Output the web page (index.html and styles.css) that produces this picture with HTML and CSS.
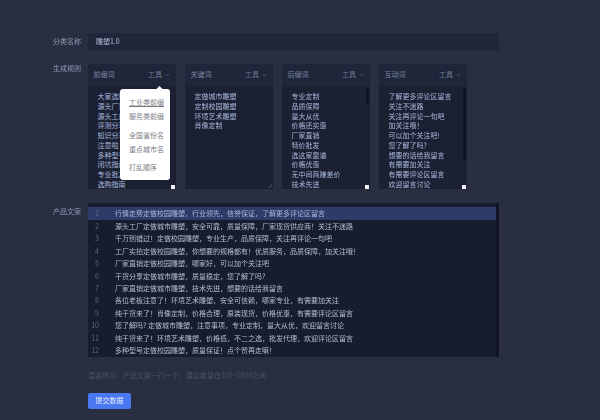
FILE: index.html
```html
<!DOCTYPE html>
<html lang="zh">
<head>
<meta charset="utf-8">
<title>分类</title>
<link rel="stylesheet" href="styles.css">
</head>
<body>
<main class="form">
  <div class="row">
    <label class="label label-input">分类名称</label>
    <div class="input">雕塑1.0</div>
  </div>
  <div class="row">
    <label class="label label-rules">生成规则</label>
    <div class="cards">
      <section class="card">
        <header class="card-head"><span>前缀词</span><span class="tool">工具<svg class="chev" viewBox="0 0 6 4"><path d="M1 1l2 2 2-2"/></svg></span></header>
        <div class="words">
          <p>大家选购</p><p>源头厂家</p><p>源头工厂</p><p>评测分享</p><p>知识分享</p><p>注意啦</p><p>多种型号</p><p>闭坑指南</p><p>专业批发</p><p>选购指南</p>
          <i class="corner"></i>
        </div>
        <div class="menu">
          <i class="arrow"></i>
          <a class="item current">工业类前缀</a>
          <a class="item">服务类前缀</a>
          <a class="item sep">全国省份名</a>
          <a class="item">重点城市名</a>
          <a class="item sep-small">打乱顺序</a>
        </div>
      </section>
      <section class="card">
        <header class="card-head"><span>关键词</span><span class="tool">工具<svg class="chev" viewBox="0 0 6 4"><path d="M1 1l2 2 2-2"/></svg></span></header>
        <div class="words">
          <p>定做城市雕塑</p><p>定制校园雕塑</p><p>环境艺术雕塑</p><p>肖像定制</p>
          <svg class="grip" viewBox="0 0 5 5"><path d="M0 5l5-5M2.5 5L5 2.5"/></svg>
        </div>
      </section>
      <section class="card">
        <header class="card-head"><span>后缀词</span><span class="tool">工具<svg class="chev" viewBox="0 0 6 4"><path d="M1 1l2 2 2-2"/></svg></span></header>
        <div class="words">
          <p>专业定制</p><p>品质保障</p><p>量大从优</p><p>价格还实惠</p><p>厂家直销</p><p>特价批发</p><p>选这家靠谱</p><p>价格优惠</p><p>无中间商赚差价</p><p>技术先进</p>
          <i class="bar bar-short"></i><i class="corner"></i>
        </div>
      </section>
      <section class="card">
        <header class="card-head"><span>互动词</span><span class="tool">工具<svg class="chev" viewBox="0 0 6 4"><path d="M1 1l2 2 2-2"/></svg></span></header>
        <div class="words">
          <p>了解更多评论区留言</p><p>关注不迷路</p><p>关注再评论一句吧</p><p>加关注哦！</p><p>可以加个关注吧!</p><p>您了解了吗?</p><p>想要的话给我留言</p><p>有需要加关注</p><p>有需要评论区留言</p><p>欢迎留言讨论</p>
          <i class="bar bar-long"></i><i class="corner"></i>
        </div>
      </section>
    </div>
  </div>
  <div class="row">
    <label class="label label-code">产品文案</label>
    <div class="editor">
      <div class="line active"><span class="num">1</span><span>行情走势定做校园雕塑，行业领先，信誉保证，了解更多评论区留言</span></div>
      <div class="line"><span class="num">2</span><span>源头工厂定做城市雕塑，安全可靠，质量保障，厂家现货供应商！关注不迷路</span></div>
      <div class="line"><span class="num">3</span><span>千万别错过！定做校园雕塑，专业生产，品质保障，关注再评论一句吧</span></div>
      <div class="line"><span class="num">4</span><span>工厂实拍定做校园雕塑，你想要的规格都有！优质服务，品质保障，加关注哦！</span></div>
      <div class="line"><span class="num">5</span><span>厂家直销定做校园雕塑，哪家好，可以加个关注吧</span></div>
      <div class="line"><span class="num">6</span><span>干货分享定做城市雕塑，质量稳定，您了解了吗?</span></div>
      <div class="line"><span class="num">7</span><span>厂家直销定做城市雕塑，技术先进，想要的话给我留言</span></div>
      <div class="line"><span class="num">8</span><span>各位老板注意了！环境艺术雕塑，安全可信赖，哪家专业，有需要加关注</span></div>
      <div class="line"><span class="num">9</span><span>纯干货来了！肖像定制，价格合理，原装现货，价格优惠，有需要评论区留言</span></div>
      <div class="line"><span class="num">10</span><span>您了解吗? 定做城市雕塑，注意事项，专业定制，量大从优，欢迎留言讨论</span></div>
      <div class="line"><span class="num">11</span><span>纯干货来了！环境艺术雕塑，价格低，不二之选，批发代理，欢迎评论区留言</span></div>
      <div class="line"><span class="num">12</span><span>多种型号定做校园雕塑，质量保证！点个赞再走嘛！</span></div>
    </div>
  </div>
  <div class="foot">
    <p class="hint">温馨提示：产品文案一行一个，建议数量在100~1000之间</p>
    <button class="submit">提交数据</button>
  </div>
</main>
</body>
</html>
```
FILE: styles.css
```css
* { box-sizing: border-box; }
html, body { margin: 0; height: 100%; }
body {
  background: #2a2e41;
  color: #a6b1cd;
  font: 7px/1.4 "Noto Sans CJK SC", "Liberation Sans", sans-serif;
  overflow: hidden;
}
.form {
  width: 600px;
  height: 420px;
  padding: 33px 101px 0 0;
  display: flex;
  flex-direction: column;
  gap: 14px;
  filter: blur(0.5px);
}
.row { display: flex; }
.label {
  width: 88px;
  padding-right: 7px;
  text-align: right;
  color: #8f99b4;
  flex: none;
}
.label-input { line-height: 17px; }
.label-code { padding-top: 4px; }
.input {
  flex: 1;
  height: 17px;
  background: #1f2639;
  padding-left: 8px;
  line-height: 17px;
  color: #b4bed8;
}
.cards {
  flex: 1;
  display: flex;
  justify-content: space-between;
  margin: 0 32px 0 -0.5px;
}
.card {
  position: relative;
  width: 88.5px;
  height: 125px;
  background: #1f2639;
  display: flex;
  flex-direction: column;
}
.card-head {
  height: 22px;
  flex: none;
  padding: 0 6px;
  display: flex;
  justify-content: space-between;
  align-items: center;
  color: #7e88a3;
}
.tool { display: flex; align-items: center; gap: 3px; color: #6f7994; }
.chev { width: 5px; height: 4px; }
.chev path { fill: none; stroke: #6f7994; stroke-width: .7; }
.words {
  position: relative;
  flex: 1;
  background: #1b2133;
  padding: 6px 10px 0;
  overflow: hidden;
  color: #aab8dc;
}
.words p { margin: 0; height: 9.75px; line-height: 9.75px; white-space: nowrap; }
.corner {
  position: absolute;
  right: 1px;
  bottom: 0;
  width: 4px;
  height: 4px;
  background: #f2f2f6;
}
.bar {
  position: absolute;
  right: 1px;
  top: 2px;
  width: 3px;
  background: #0f1322;
}
.bar-short { height: 16px; }
.bar-long { height: 72px; }
.grip {
  position: absolute;
  right: 1px;
  bottom: 1px;
  width: 4px;
  height: 4px;
}
.grip path { fill: none; stroke: #6f7994; stroke-width: .6; }
.menu {
  position: absolute;
  left: 32.5px;
  top: 25px;
  width: 50px;
  height: 91px;
  background: #fff;
  border-radius: 3px;
  padding: 6px 0 0 9px;
  display: flex;
  flex-direction: column;
  color: #777b85;
}
.arrow {
  position: absolute;
  right: 8px;
  top: -2px;
  width: 5px;
  height: 5px;
  background: #fff;
  transform: rotate(45deg);
}
.item, .sep-small { height: 14px; line-height: 14px; white-space: nowrap; }
.item.sep { margin-top: 5px; }
.sep-small { margin-top: 4px; }
.current { text-decoration: underline; }
.editor {
  flex: 1;
  height: 154px;
  background: #181d2e;
  padding-top: 4px;
  border-right: 3px solid #0f1322;
}
.line {
  display: flex;
  height: 12.4px;
  line-height: 12.4px;
  color: #b4bdd2;
  white-space: nowrap;
}
.line.active { background: #2f3a66; height: 13px; color: #a9b6de; }
.num {
  width: 27px;
  flex: none;
  padding-right: 16px;
  text-align: right;
  color: #5d6680;
}
.foot { padding-left: 88px; margin-top: -1px; }
.hint { margin: 0 0 13px; line-height: 10px; color: #4b5268; }
.submit {
  display: block;
  width: 43px;
  height: 16px;
  padding: 0;
  border: 0;
  border-radius: 2px;
  background: #4a78f0;
  color: #e8eeff;
  font: inherit;
}
```
